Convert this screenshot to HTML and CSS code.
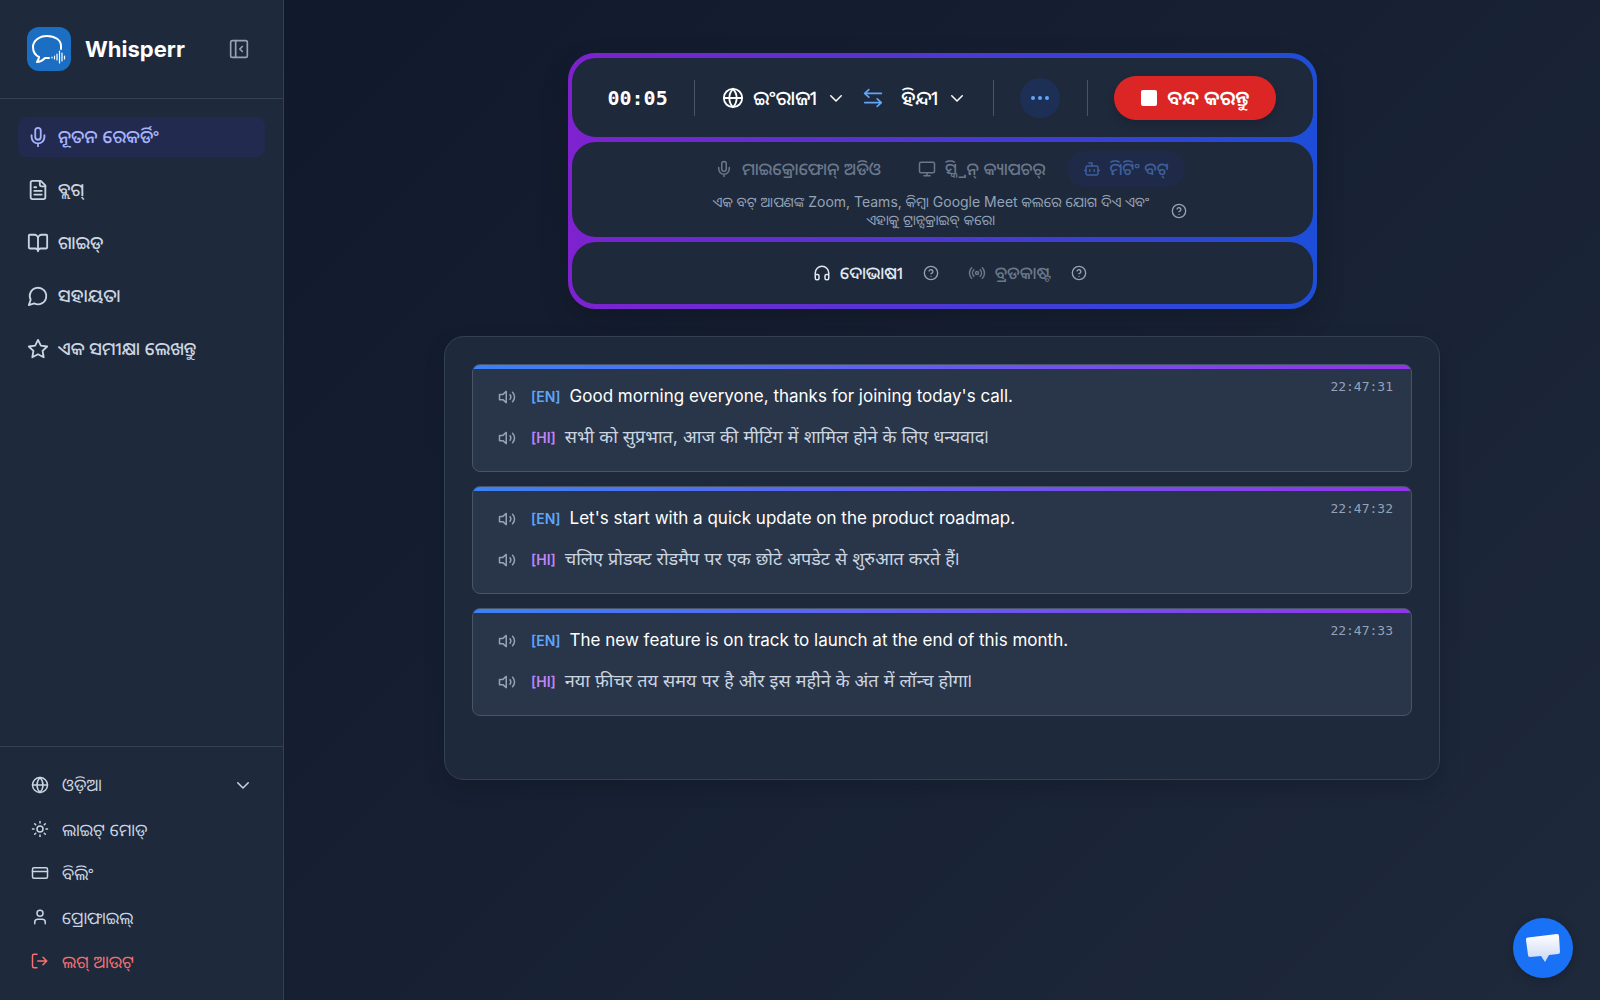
FILE: index.html
```html
<!DOCTYPE html>
<html lang="or">
<head>
<meta charset="utf-8">
<meta name="viewport" content="width=device-width, initial-scale=1">
<title>Whisperr</title>
<link rel="stylesheet" href="styles.css">
</head>
<body>
<svg class="sprite" aria-hidden="true">
  <symbol id="panel" viewBox="0 0 24 24"><rect x="2" y="2" width="20" height="20" rx="2"/><path d="M8 2v20M16 15l-3-3 3-3"/></symbol>
  <symbol id="mic" viewBox="0 0 24 24"><path d="M12 2a3 3 0 0 0-3 3v7a3 3 0 0 0 6 0V5a3 3 0 0 0-3-3Z"/><path d="M19 10v2a7 7 0 0 1-14 0v-2M12 19v3"/></symbol>
  <symbol id="file" viewBox="0 0 24 24"><path d="M15 2H6a2 2 0 0 0-2 2v16a2 2 0 0 0 2 2h12a2 2 0 0 0 2-2V7Z"/><path d="M14 2v4a2 2 0 0 0 2 2h4M10 9H8M16 13H8M16 17H8"/></symbol>
  <symbol id="book" viewBox="0 0 24 24"><path d="M12 7v14M3 18a1 1 0 0 1-1-1V4a1 1 0 0 1 1-1h5a4 4 0 0 1 4 4 4 4 0 0 1 4-4h5a1 1 0 0 1 1 1v13a1 1 0 0 1-1 1h-6a3 3 0 0 0-3 3 3 3 0 0 0-3-3z"/></symbol>
  <symbol id="chat" viewBox="0 0 24 24"><path d="M7.900 20A9 9 0 1 0 4 16.100L2 22Z"/></symbol>
  <symbol id="star" viewBox="0 0 24 24"><path d="m12 2 3.090 6.260L22 9.270l-5 4.870 1.180 6.880L12 17.770l-6.180 3.250L7 14.140 2 9.270l6.910-1.010Z"/></symbol>
  <symbol id="globe" viewBox="0 0 24 24"><circle cx="12" cy="12" r="10"/><path d="M12 2a14.500 14.500 0 0 0 0 20 14.500 14.500 0 0 0 0-20M2 12h20"/></symbol>
  <symbol id="down" viewBox="0 0 24 24"><path d="m5 9 7 7 7-7"/></symbol>
  <symbol id="sun" viewBox="0 0 24 24"><circle cx="12" cy="12" r="4"/><path d="M12 2v2M12 20v2M4.900 4.900l1.400 1.400M17.700 17.700l1.400 1.400M2 12h2M20 12h2M6.300 17.700l-1.400 1.400M19.100 4.900l-1.400 1.400"/></symbol>
  <symbol id="card" viewBox="0 0 24 24"><rect x="2" y="5" width="20" height="14" rx="2"/><path d="M2 10h20"/></symbol>
  <symbol id="user" viewBox="0 0 24 24"><circle cx="12" cy="7" r="4"/><path d="M19 21v-2a4 4 0 0 0-4-4H9a4 4 0 0 0-4 4v2"/></symbol>
  <symbol id="logout" viewBox="0 0 24 24"><path d="M8 3H4a2 2 0 0 0-2 2v14a2 2 0 0 0 2 2h4M16 17l5-5-5-5M21 12H9"/></symbol>
  <symbol id="swap" viewBox="0 0 24 24"><path d="M7 2 2 6.500 7 11M2 6.500h20M17 13l5 4.500-5 4.500M22 17.500H2"/></symbol>
  <symbol id="monitor" viewBox="0 0 24 24"><rect x="2" y="3" width="20" height="14" rx="2"/><path d="M8 21h8M12 17v4"/></symbol>
  <symbol id="bot" viewBox="0 0 24 24"><path d="M12 8V4H8"/><rect x="4" y="8" width="16" height="12" rx="2"/><path d="M2 14h2M20 14h2M15 13v2M9 13v2"/></symbol>
  <symbol id="help" viewBox="0 0 24 24"><circle cx="12" cy="12" r="10"/><path d="M9.100 9a3 3 0 0 1 5.800 1c0 2-2.900 3-2.900 3M12 17h.01"/></symbol>
  <symbol id="headphones" viewBox="0 0 24 24"><path d="M3 14h3a2 2 0 0 1 2 2v3a2 2 0 0 1-2 2H5a2 2 0 0 1-2-2v-7a9 9 0 0 1 18 0v7a2 2 0 0 1-2 2h-1a2 2 0 0 1-2-2v-3a2 2 0 0 1 2-2h3"/></symbol>
  <symbol id="radio" viewBox="0 0 24 24"><circle cx="12" cy="12" r="2"/><path d="M4.900 19.100C1 15.200 1 8.800 4.900 4.900M7.800 16.200c-2.300-2.300-2.300-6.100 0-8.500M16.200 7.800c2.300 2.300 2.300 6.100 0 8.500M19.100 4.900C23 8.800 23 15.100 19.100 19"/></symbol>
  <symbol id="volume" viewBox="0 0 24 24"><path d="M11 4.500 6.500 8.500H2v7h4.500L11 19.500ZM16 9a5 5 0 0 1 0 6M19.400 5.600a9 9 0 0 1 0 12.700"/></symbol>
</svg>

<div class="app">
  <aside class="sidebar">
    <header class="brand">
      <svg class="logo" viewBox="0 0 44 44" aria-hidden="true">
        <rect width="44" height="44" rx="12" fill="#1b6ec2"/>
        <path d="M34 22v-3c0-6-6-10-14-10S6 14 6 20c0 5 2 8 6 10 0 2-1 3-2 5 4 0 6-2 8-4h4" fill="none" stroke="#fff" stroke-width="2" stroke-linecap="round" stroke-linejoin="round"/>
        <path d="M25 30v1M27.500 29v3M30 27v6M32.500 24v12M35 26v8M37.500 29v3" stroke="#fff" stroke-width="1.200" stroke-linecap="round"/>
      </svg>
      <h1 class="brand-name">Whisperr</h1>
      <button class="icon-button" type="button" aria-label="Collapse"><svg class="icon icon-lg"><use href="#panel"/></svg></button>
    </header>
    <nav class="nav">
      <a class="nav-link active" href="#"><svg class="icon icon-xl"><use href="#mic"/></svg>ନୂତନ ରେକର୍ଡିଂ</a>
      <a class="nav-link" href="#"><svg class="icon icon-xl"><use href="#file"/></svg>ବ୍ଲଗ୍</a>
      <a class="nav-link" href="#"><svg class="icon icon-xl"><use href="#book"/></svg>ଗାଇଡ୍</a>
      <a class="nav-link" href="#"><svg class="icon icon-xl"><use href="#chat"/></svg>ସହାୟତା</a>
      <a class="nav-link" href="#"><svg class="icon icon-xl"><use href="#star"/></svg>ଏକ ସମୀକ୍ଷା ଲେଖନ୍ତୁ</a>
    </nav>
    <div class="account">
      <label class="account-item"><svg class="icon"><use href="#globe"/></svg><select class="select grow" aria-label="Language"><option>ଓଡ଼ିଆ</option></select><svg class="icon"><use href="#down"/></svg></label>
      <button class="account-item" type="button"><svg class="icon"><use href="#sun"/></svg>ଲାଇଟ୍ ମୋଡ୍</button>
      <a class="account-item" href="#"><svg class="icon"><use href="#card"/></svg>ବିଲିଂ</a>
      <a class="account-item" href="#"><svg class="icon"><use href="#user"/></svg>ପ୍ରୋଫାଇଲ୍</a>
      <button class="account-item danger" type="button"><svg class="icon"><use href="#logout"/></svg>ଲଗ୍ ଆଉଟ୍</button>
    </div>
  </aside>

  <main class="main">
    <section class="recorder">
      <div class="panel controls">
        <time class="timer">00:05</time>
        <span class="divider"></span>
        <div class="languages">
          <label class="language"><svg class="icon icon-xl"><use href="#globe"/></svg><select class="select" aria-label="From"><option>ଇଂରାଜୀ</option></select><svg class="icon"><use href="#down"/></svg></label>
          <button class="swap" type="button" aria-label="Swap"><svg class="icon icon-lg"><use href="#swap"/></svg></button>
          <label class="language"><select class="select" aria-label="To"><option>ହିନ୍ଦୀ</option></select><svg class="icon"><use href="#down"/></svg></label>
        </div>
        <span class="divider"></span>
        <button class="more" type="button" aria-label="More"><svg class="dots" viewBox="0 0 18 4"><circle cx="2" cy="2" r="2"/><circle cx="9" cy="2" r="2"/><circle cx="16" cy="2" r="2"/></svg></button>
        <span class="divider"></span>
        <button class="stop" type="button"><span class="stop-mark"></span>ବନ୍ଦ କରନ୍ତୁ</button>
      </div>
      <div class="panel source">
        <div class="modes">
          <button class="mode" type="button" disabled><svg class="icon"><use href="#mic"/></svg>ମାଇକ୍ରୋଫୋନ୍ ଅଡିଓ</button>
          <button class="mode" type="button" disabled><svg class="icon"><use href="#monitor"/></svg>ସ୍କ୍ରିନ୍ କ୍ୟାପଚର୍</button>
          <button class="mode selected" type="button" disabled><svg class="icon"><use href="#bot"/></svg>ମିଟିଂ ବଟ୍</button>
        </div>
        <div class="hint">
          <p class="hint-text">ଏକ ବଟ୍ ଆପଣଙ୍କ Zoom, Teams, କିମ୍ବା Google Meet କଲରେ ଯୋଗ ଦିଏ ଏବଂ ଏହାକୁ ଟ୍ରାନ୍ସକ୍ରାଇବ୍ କରେ।</p>
          <button class="help" type="button" aria-label="Help"><svg class="icon icon-sm"><use href="#help"/></svg></button>
        </div>
      </div>
      <div class="panel outputs">
        <div class="output">
          <button class="mode current" type="button"><svg class="icon"><use href="#headphones"/></svg>ଦୋଭାଷୀ</button>
          <button class="help" type="button" aria-label="Help"><svg class="icon icon-sm"><use href="#help"/></svg></button>
        </div>
        <div class="output">
          <button class="mode" type="button" disabled><svg class="icon"><use href="#radio"/></svg>ବ୍ରଡକାଷ୍ଟ</button>
          <button class="help" type="button" aria-label="Help"><svg class="icon icon-sm"><use href="#help"/></svg></button>
        </div>
      </div>
    </section>

    <section class="transcript">
      <article class="entry">
        <div class="lines">
          <div class="line"><button class="play" type="button" aria-label="Play"><svg class="icon"><use href="#volume"/></svg></button><p class="text"><span class="tag">[EN]</span>Good morning everyone, thanks for joining today's call.</p></div>
          <div class="line"><button class="play" type="button" aria-label="Play"><svg class="icon"><use href="#volume"/></svg></button><p class="text translated" lang="hi"><span class="tag">[HI]</span>सभी को सुप्रभात, आज की मीटिंग में शामिल होने के लिए धन्यवाद।</p></div>
        </div>
        <time class="stamp">22:47:31</time>
      </article>
      <article class="entry">
        <div class="lines">
          <div class="line"><button class="play" type="button" aria-label="Play"><svg class="icon"><use href="#volume"/></svg></button><p class="text"><span class="tag">[EN]</span>Let's start with a quick update on the product roadmap.</p></div>
          <div class="line"><button class="play" type="button" aria-label="Play"><svg class="icon"><use href="#volume"/></svg></button><p class="text translated" lang="hi"><span class="tag">[HI]</span>चलिए प्रोडक्ट रोडमैप पर एक छोटे अपडेट से शुरुआत करते हैं।</p></div>
        </div>
        <time class="stamp">22:47:32</time>
      </article>
      <article class="entry">
        <div class="lines">
          <div class="line"><button class="play" type="button" aria-label="Play"><svg class="icon"><use href="#volume"/></svg></button><p class="text"><span class="tag">[EN]</span>The new feature is on track to launch at the end of this month.</p></div>
          <div class="line"><button class="play" type="button" aria-label="Play"><svg class="icon"><use href="#volume"/></svg></button><p class="text translated" lang="hi"><span class="tag">[HI]</span>नया फ़ीचर तय समय पर है और इस महीने के अंत में लॉन्च होगा।</p></div>
        </div>
        <time class="stamp">22:47:33</time>
      </article>
    </section>
  </main>
</div>

<button class="launcher" type="button" aria-label="Chat">
  <svg class="launcher-icon" viewBox="0 0 34 30">
    <defs><linearGradient id="bubble" x1="0" y1="0" x2="0" y2="1"><stop offset="0" stop-color="#fff"/><stop offset="1" stop-color="#c9d6f3"/></linearGradient></defs>
    <path d="M2 4.500 31 1a2 2 0 0 1 2 2l1 16a2 2 0 0 1-2 2l-9 1-4 7-4-6-11 1a2 2 0 0 1-2-2L0 7a2 2 0 0 1 2-2.500Z" fill="url(#bubble)"/>
  </svg>
</button>
</body>
</html>
```
FILE: styles.css
```css
* { box-sizing: border-box; }

body {
  margin: 0;
  font-family: Inter, "Noto Sans Oriya", "Noto Sans Devanagari", "Noto Sans", sans-serif;
  font-size: 17px;
  color: #fff;
  background: #0f172a;
}

h1, p { margin: 0; }

button, select {
  font: inherit;
  color: inherit;
  background: none;
  border: 0;
  padding: 0;
  margin: 0;
}

a { color: inherit; text-decoration: none; }

.sprite { display: none; }

.icon {
  width: 18px;
  height: 18px;
  flex: none;
  fill: none;
  stroke: currentColor;
  stroke-width: 2;
  stroke-linecap: round;
  stroke-linejoin: round;
  overflow: visible;
}
.icon-sm { width: 16px; height: 16px; }
.icon-lg { width: 20px; height: 20px; }
.icon-xl { width: 22px; height: 22px; }

.select { appearance: none; outline: 0; line-height: 28px; }
.grow { flex: 1; min-width: 0; }

.app {
  display: flex;
  min-height: 100vh;
  background: linear-gradient(135deg, #0f172a, #1e293b);
}

.sidebar {
  display: flex;
  flex-direction: column;
  flex: none;
  width: 284px;
  background: #1e293b;
  border-right: 1px solid #334155;
}

.brand {
  display: flex;
  align-items: center;
  height: 99px;
  padding: 0 34px 0 27px;
  gap: 14px;
  border-bottom: 1px solid #334155;
}
.logo { width: 44px; height: 44px; }
.brand-name { flex: 1; font-size: 22px; font-weight: 700; }
.icon-button { display: flex; color: #94a3b8; }

.nav {
  display: flex;
  flex-direction: column;
  gap: 13px;
  padding: 18px;
}
.nav-link {
  display: flex;
  align-items: center;
  gap: 9px;
  height: 40px;
  padding: 0 9px;
  border-radius: 9px;
  font-size: 18px;
  font-weight: 500;
  line-height: 24px;
  color: #cbd5e1;
}
.nav-link.active { color: #a5b4fc; background: #232a50; }

.account {
  display: flex;
  flex-direction: column;
  margin-top: auto;
  padding: 16px 31px 17px;
  border-top: 1px solid #334155;
}
.account-item {
  display: flex;
  align-items: center;
  gap: 13px;
  height: 44px;
  color: #cbd5e1;
}
.account-item.danger { color: #f87171; }

.main {
  display: flex;
  flex-direction: column;
  align-items: center;
  flex: 1;
  gap: 27px;
  padding: 53px 32px;
}

.recorder {
  display: flex;
  flex-direction: column;
  gap: 5px;
  width: 100%;
  max-width: 749px;
  padding: 5px 4px;
  border-radius: 27px;
  background: linear-gradient(90deg, #7e22ce, #1d4ed8);
  box-shadow: 0 12px 28px rgba(0, 0, 0, .2);
}
.panel { border-radius: 24px; background: #1e293b; }

.controls {
  display: flex;
  align-items: center;
  justify-content: space-between;
  height: 79px;
  padding: 0 36px;
  font-size: 20px;
  font-weight: 500;
}
.timer { font: 700 20px "DejaVu Sans Mono", monospace; }
.divider { width: 1px; height: 36px; background: #475569; }
.languages { display: flex; align-items: center; gap: 18px; }
.language { display: flex; align-items: center; gap: 9px; }
.swap { display: flex; color: #60a5fa; }
.more {
  display: flex;
  align-items: center;
  justify-content: center;
  width: 40px;
  height: 40px;
  border-radius: 20px;
  background: #1e2f56;
}
.dots { width: 18px; height: 4px; fill: #60a5fa; }
.stop {
  display: flex;
  align-items: center;
  gap: 10px;
  height: 44px;
  padding: 0 27px;
  border-radius: 22px;
  font-weight: 600;
  line-height: 28px;
  background: #dc2626;
  box-shadow: 0 4px 8px rgba(0, 0, 0, .15);
}
.stop-mark { width: 16px; height: 16px; border-radius: 2px; background: #fff; }

.source { padding: 9px 16px 8px; }
.modes { display: flex; justify-content: center; gap: 5px; }
.mode {
  display: flex;
  align-items: center;
  gap: 9px;
  height: 36px;
  padding: 0 16px;
  border-radius: 18px;
  font-weight: 500;
  line-height: 24px;
  color: #6b788c;
}
.mode.selected { color: #3e5f9c; background: #1e2a48; }
.mode.current { color: #e2e8f0; }
.hint {
  display: flex;
  align-items: center;
  justify-content: center;
  gap: 6px;
  margin-top: 6px;
}
.hint-text {
  max-width: 468px;
  font-size: 14px;
  line-height: 18px;
  text-align: center;
  color: #94a3b8;
}
.help { display: flex; color: #94a3b8; }

.outputs {
  display: flex;
  align-items: center;
  justify-content: center;
  gap: 13px;
  height: 62px;
}
.output { display: flex; align-items: center; gap: 4px; }

.transcript {
  display: flex;
  flex-direction: column;
  gap: 14px;
  width: 100%;
  max-width: 996px;
  padding: 27px 27px 63px;
  border: 1px solid #334155;
  border-radius: 20px;
  background: #1e293b;
  box-shadow: 0 8px 20px rgba(0, 0, 0, .15);
}
.entry {
  display: flex;
  justify-content: space-between;
  height: 108px;
  padding: 17px 18px 17px 25px;
  border: 1px solid #475569;
  border-radius: 8px;
  background: linear-gradient(90deg, #3b82f6, #9333ea) top / 100% 4px no-repeat, #293548;
}
.lines { display: flex; flex-direction: column; gap: 12px; }
.line { display: flex; align-items: center; gap: 15px; }
.play { display: flex; color: #94a3b8; }
.text { font-size: 17px; line-height: 28px; }
.translated { font-size: 18px; color: #cbd5e1; }
.tag { margin-right: 9px; font-size: 14px; font-weight: 600; color: #60a5fa; }
.translated .tag { color: #c084fc; }
.stamp {
  margin-top: -3px;
  font: 13px "DejaVu Sans Mono", monospace;
  color: #94a3b8;
}

.launcher {
  position: fixed;
  right: 27px;
  bottom: 22px;
  display: flex;
  align-items: center;
  justify-content: center;
  width: 60px;
  height: 60px;
  border-radius: 30px;
  background: #1972f5;
  box-shadow: 0 2px 10px rgba(0, 0, 0, .2);
}
.launcher-icon { width: 34px; height: 30px; }
```
